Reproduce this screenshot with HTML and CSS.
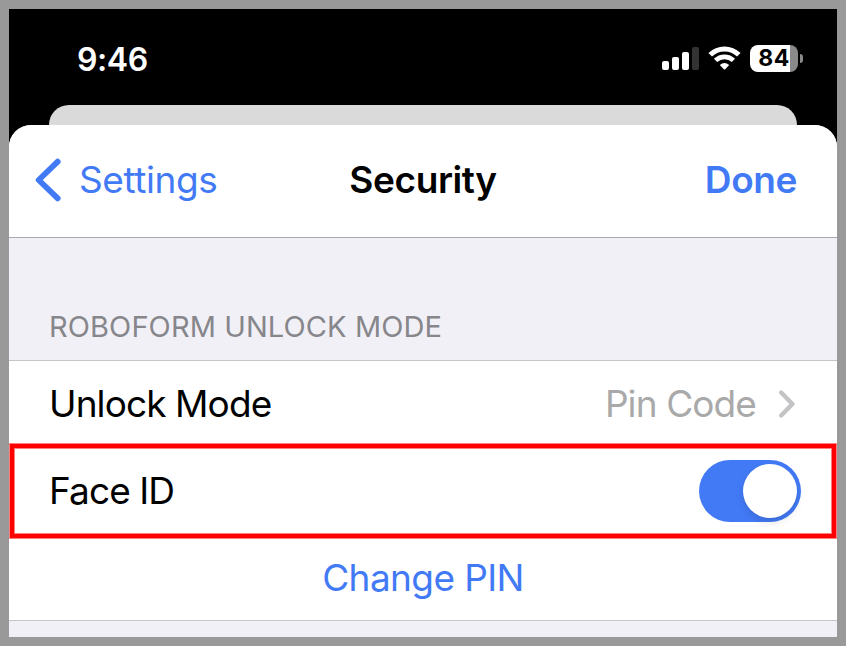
FILE: index.html
```html
<!DOCTYPE html>
<html lang="en">
<head>
  <meta charset="UTF-8">
  <meta name="viewport" content="width=device-width, initial-scale=1.0">
  <title>Security</title>
  <link rel="stylesheet" href="styles.css">
</head>
<body>

  <div class="screen">
    <!-- Status Bar -->
    <div class="status-bar">
      <span class="time">9:46</span>
      <div class="status-icons">
        <svg class="signal" width="37" height="23" viewBox="0 0 37 23">
          <rect x="0" y="14" width="7" height="9" rx="2" fill="#fff"/>
          <rect x="10" y="10" width="7" height="13" rx="2" fill="#fff"/>
          <rect x="20" y="5" width="7" height="18" rx="2" fill="#fff"/>
          <rect x="30" y="0" width="7" height="23" rx="2" fill="#333"/>
        </svg>
        <svg class="wifi" width="33" height="24" viewBox="0 0 33 24">
          <path d="M2.2 8.8A20.3 20.3 0 0 1 30.8 8.8" fill="none" stroke="#fff" stroke-width="5"/>
          <path d="M7.6 14.4A12.8 12.8 0 0 1 25.4 14.4" fill="none" stroke="#fff" stroke-width="4.8"/>
          <path d="M11.8 19Q16.5 15 21.2 19L17.2 23.2Q16.5 23.9 15.8 23.2Z" fill="#fff"/>
        </svg>
        <div class="battery"><span>84</span></div>
        <div class="battery-tip"></div>
      </div>
    </div>

    <div class="back-sheet"></div>

    <div class="sheet">
      <!-- Navigation Bar -->
      <div class="nav-bar">
        <div class="back">
          <svg width="26" height="44" viewBox="0 0 26 44">
            <path d="M22.7 3.7L3.7 22L22.7 40.3" fill="none" stroke="#427af6" stroke-width="5.8" stroke-linecap="round" stroke-linejoin="round"/>
          </svg>
          <span>Settings</span>
        </div>
        <div class="title">Security</div>
        <div class="done">Done</div>
      </div>

      <div class="section-header">ROBOFORM UNLOCK MODE</div>

      <!-- Unlock Settings -->
      <div class="list">
        <div class="row">
          <span class="label">Unlock Mode</span>
          <span class="value">Pin Code</span>
          <svg class="chevron" width="18" height="28" viewBox="0 0 18 28">
            <path d="M2.2 2.5L13.4 14L2.2 25.5" fill="none" stroke="#c4c4c6" stroke-width="4.4" stroke-linecap="round" stroke-linejoin="round"/>
          </svg>
        </div>
        <div class="row face-row">
          <span class="label">Face ID</span>
          <div class="toggle"><div class="knob"></div></div>
          <div class="highlight"></div>
        </div>
        <div class="row action-row">
          <span class="action">Change PIN</span>
        </div>
      </div>
    </div>
  </div>

</body>
</html>
```
FILE: styles.css
```css
/* General Styles */
* {
  box-sizing: border-box;
}

body {
  margin: 0;
  font-family: Inter, "Liberation Sans", sans-serif;
  font-size: 37px;
  color: #000;
}

.screen {
  width: 846px;
  height: 646px;
  border: 9px solid #999;
  background-color: #000;
  overflow: hidden;
  display: flex;
  flex-direction: column;
}

/* Status Bar */
.status-bar {
  height: 96px;
  padding: 4px 34px 0 68px;
  display: flex;
  justify-content: space-between;
  align-items: center;
  color: #fff;
}

.time {
  font-size: 32px;
  font-weight: 600;
  letter-spacing: -0.4px;
}

.status-icons {
  margin-bottom: 2px;
  display: flex;
  align-items: center;
}

.wifi {
  margin-left: 9px;
}

.battery {
  width: 48px;
  height: 27px;
  margin-left: 9px;
  border-radius: 8px;
  background: linear-gradient(to right, #fff 40px, #8a8a8a 40px);
  color: #000;
  font-size: 23px;
  font-weight: 700;
  letter-spacing: 0.6px;
  line-height: 27px;
  text-align: center;
}

.battery-tip {
  width: 3px;
  height: 9px;
  margin-left: 2px;
  border-radius: 0 4px 4px 0;
  background-color: #8a8a8a;
}

/* Sheets */
.back-sheet {
  height: 20px;
  margin: 0 40px;
  border-radius: 20px 20px 0 0;
  background-color: #dadada;
}

.sheet {
  flex: 1;
  border-radius: 22px 22px 0 0;
  background-color: #f1f0f6;
  overflow: hidden;
}

/* Navigation Bar */
.nav-bar {
  height: 113px;
  padding: 0 26px 3px;
  border-bottom: 1px solid #a9a9ab;
  background-color: #fff;
  display: grid;
  grid-template-columns: 1fr auto 1fr;
  align-items: center;
  letter-spacing: -0.4px;
}

.back {
  display: flex;
  align-items: center;
  gap: 18px;
  color: #427af6;
}

.title {
  font-weight: 600;
}

.done {
  padding-right: 14px;
  color: #427af6;
  font-weight: 600;
  text-align: right;
}

.section-header {
  height: 122px;
  padding: 70px 40px 0;
  color: #86868b;
  font-size: 29px;
  letter-spacing: 0.1px;
  line-height: 38px;
}

/* List Rows */
.list {
  border-top: 1px solid #c5c5c9;
  border-bottom: 1px solid #c5c5c9;
  background-color: #fff;
}

.row {
  height: 87px;
  padding: 0 40px 2px;
  display: flex;
  align-items: center;
  letter-spacing: -0.9px;
}

.label {
  flex: 1;
}

.value {
  color: #a9a9a9;
}

.chevron {
  margin-left: 23px;
}

.face-row {
  position: relative;
  padding-right: 36px;
}

.toggle {
  width: 102px;
  height: 62px;
  padding: 4px;
  border-radius: 31px;
  background-color: #427af6;
  display: flex;
  justify-content: flex-end;
}

.knob {
  width: 54px;
  height: 54px;
  border-radius: 50%;
  background-color: #fff;
  box-shadow: 0 4px 8px rgba(0, 0, 0, 0.12);
}

/* Red outline drawn over the row */
.highlight {
  position: absolute;
  top: -4px;
  left: 1px;
  right: 1px;
  height: 94px;
  border: 4px solid #f00;
  box-shadow: 0 0 0 1px rgba(255, 0, 0, 0.5), inset 0 0 0 1px rgba(255, 0, 0, 0.5);
}

.action-row {
  height: 85px;
  padding-bottom: 0;
  justify-content: center;
  letter-spacing: -0.6px;
}

.action {
  color: #427af6;
}
```
